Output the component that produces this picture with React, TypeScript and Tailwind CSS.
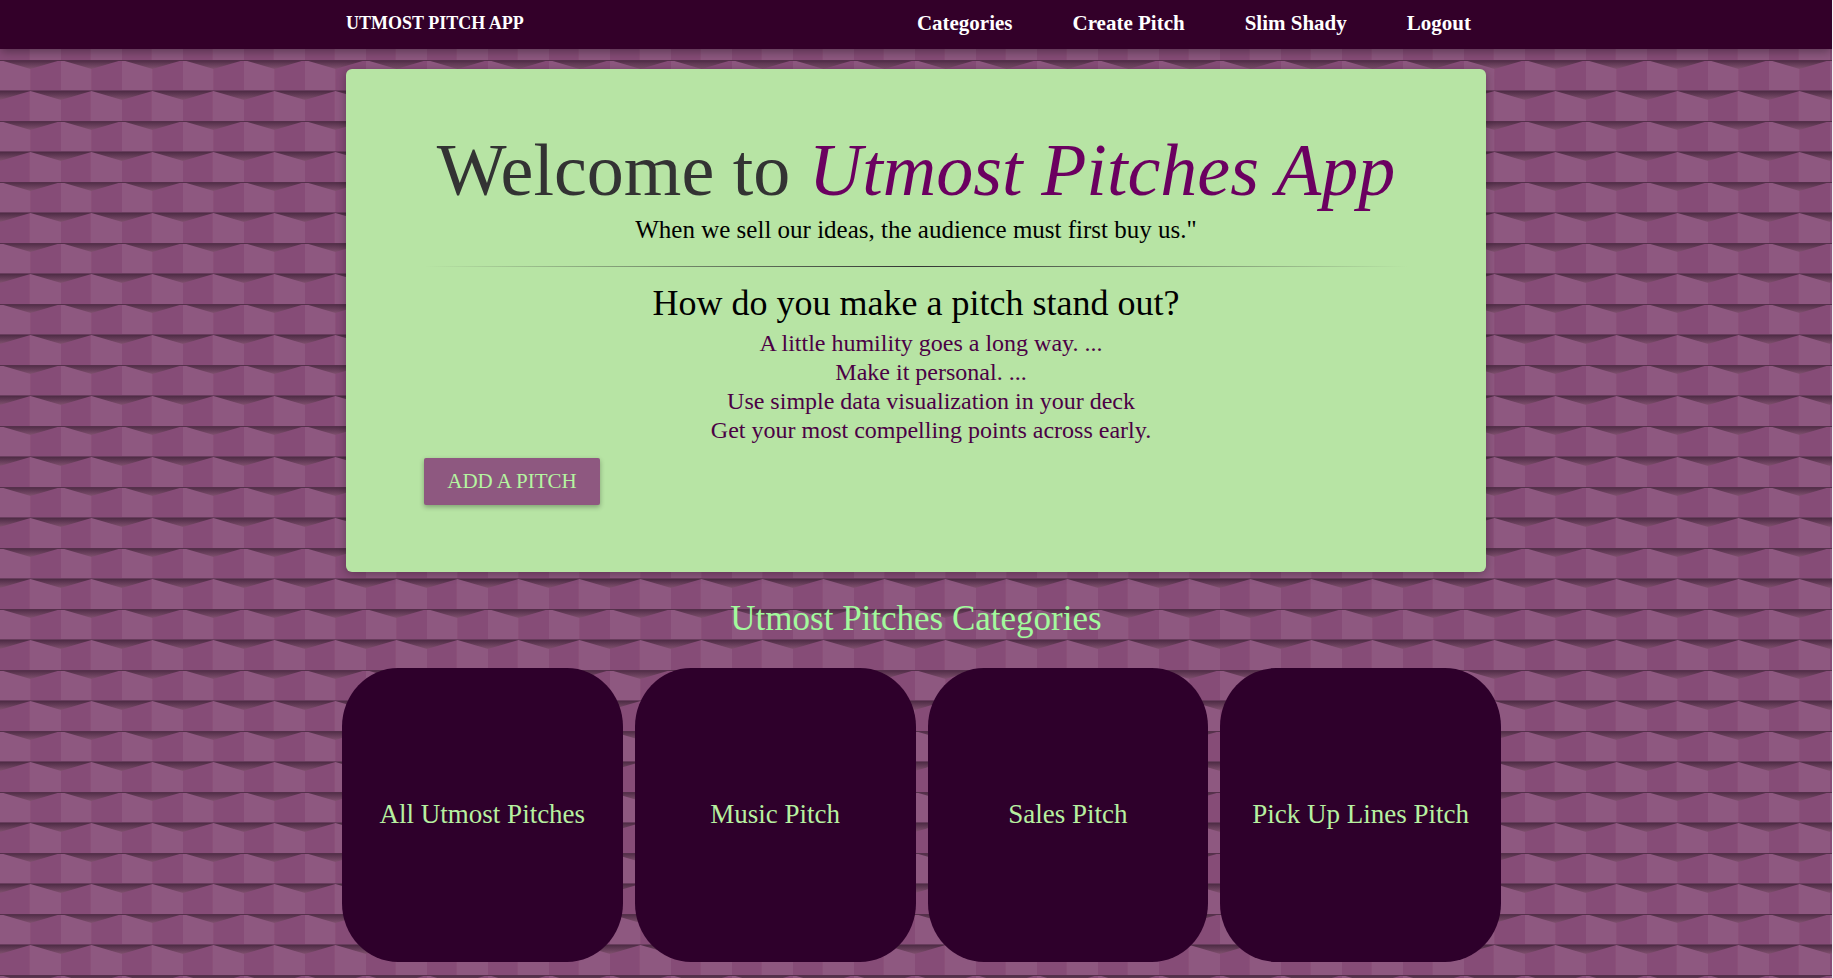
const navLinks = ['Categories', 'Create Pitch', 'Slim Shady', 'Logout'];

const tips = [
  'A little humility goes a long way. ...',
  'Make it personal. ...',
  'Use simple data visualization in your deck',
  'Get your most compelling points across early.',
];

const categories = ['All Utmost Pitches', 'Music Pitch', 'Sales Pitch', 'Pick Up Lines Pitch'];

function Backdrop() {
  return (
    <svg className="absolute inset-0 -z-10 h-full w-full" aria-hidden="true">
      <defs>
        <linearGradient id="shade" x1="0" y1="0" x2="0" y2="1">
          <stop offset="0" stopColor="#4d2b44" />
          <stop offset="1" stopColor="#80506f" />
        </linearGradient>
        <pattern id="bricks" width="61" height="61" y="-1" patternUnits="userSpaceOnUse">
          <rect width="61" height="61" fill="#864c77" />
          <rect width="30" height="31" fill="#8e5880" />
          <rect x="30" y="31" width="31" height="30" fill="#8e5880" />
          <rect x="30" width="1" height="31" fill="#8a5079" />
          <rect x="29" y="31" width="1" height="30" fill="#8a5079" />
          <path d="M0 0H61L30.5 9Z" fill="url(#shade)" />
          <path d="M0 31H30.5L0 40Z" fill="url(#shade)" />
          <path d="M30.5 31H61V40Z" fill="url(#shade)" />
          <rect width="61" height="1" fill="#55304b" />
          <rect y="30" width="61" height="1" fill="#683d5d" />
        </pattern>
      </defs>
      <rect width="100%" height="100%" fill="url(#bricks)" />
    </svg>
  );
}

export default function App() {
  return (
    <div className="relative isolate min-h-screen overflow-hidden border-r border-[#f5f5f5] font-['Liberation_Serif',serif] text-black">
      <Backdrop />
      <header className="bg-[#330029] shadow-[0_2px_10px_rgba(0,0,0,0.4)]">
        <nav className="mx-auto flex h-[49px] max-w-[1140px] items-center justify-between pb-0.5 font-bold text-white">
          <a href="#home" className="text-[18px]">UTMOST PITCH APP</a>
          <ul className="flex gap-[60px] pr-[15px] text-[21px]">
            {navLinks.map((label) => (
              <li key={label}>
                <a href="#nav">{label}</a>
              </li>
            ))}
          </ul>
        </nav>
      </header>

      <main className="mx-auto max-w-[1170px] pt-5 pb-4">
        <section className="mx-[15px] rounded-md bg-[#b7e4a4] px-[78px] pt-[64px] pb-[67px] text-center shadow-[0_2px_10px_rgba(0,0,0,0.3)]">
          <h1 className="text-[74px] leading-[74px] text-[#333333]">
            Welcome to <em className="text-[#6b0060]">Utmost Pitches App</em>
          </h1>
          <p className="mt-[7px] text-[25px] leading-8">When we sell our ideas, the audience must first buy us."</p>
          <hr className="mt-5 h-px border-0 bg-linear-to-r from-transparent via-[#333333] to-transparent" />
          <h2 className="mt-4 text-[36px] leading-10">How do you make a pitch stand out?</h2>
          <ul className="mt-[6px] pl-[30px] text-[24px] leading-[29px] text-[#4b0045]">
            {tips.map((tip) => (
              <li key={tip}>{tip}</li>
            ))}
          </ul>
          <div className="mt-[13px] text-left">
            <button
              type="button"
              className="h-[47px] w-[176px] rounded-xs bg-[#8e5880] text-[21px] text-[#b5f5a0] shadow-[0_2px_5px_rgba(0,0,0,0.3)]"
            >
              ADD A PITCH
            </button>
          </div>
        </section>

        <h2 className="mt-[27px] text-center text-[35px] leading-10 text-[#a2fa9c]">Utmost Pitches Categories</h2>

        <div className="mt-[29px] grid grid-cols-4 gap-3 pl-[11px]">
          {categories.map((name) => (
            <a
              key={name}
              href="#category"
              className="flex h-[294px] items-center justify-center rounded-[20%] bg-[#2e002b] pb-0.5 text-[27px] text-[#b7f0a0]"
            >
              {name}
            </a>
          ))}
        </div>
      </main>
    </div>
  );
}
